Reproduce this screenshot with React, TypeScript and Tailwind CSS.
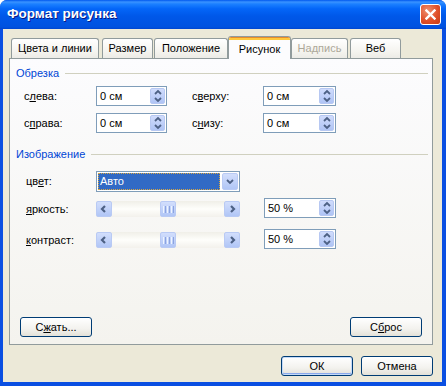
import React from "react";

function Chevron({ dir }: { dir: "up" | "down" | "left" | "right" }) {
  const pts: Record<string, string> = {
    up: "1,5 4,2 7,5",
    down: "1,2 4,5 7,2",
    left: "5,1 2,4 5,7",
    right: "3,1 6,4 3,7",
  };
  const vertical = dir === "up" || dir === "down";
  return (
    <svg width={8} height={vertical ? 7 : 8} viewBox={vertical ? "0 0 8 7" : "0 0 8 8"}>
      <polyline points={pts[dir]} fill="none" stroke="#4D6185" strokeWidth={vertical ? 1.8 : 2.2} />
    </svg>
  );
}

function Spinner({ value, className }: { value: string; className: string }) {
  return (
    <div className={`flex h-[20px] border border-[#7F9DB9] bg-white ${className}`}>
      <div className="flex flex-1 items-center pl-[3px] text-[11px] text-black">{value}</div>
      <div className="my-px mr-px flex w-[15px] flex-col items-center justify-around rounded-[2px] border border-[#B7C8F2] bg-[linear-gradient(#D0DCFC,#AFC4F5)]">
        <Chevron dir="up" />
        <Chevron dir="down" />
      </div>
    </div>
  );
}

function ScrollBtn({ dir }: { dir: "left" | "right" }) {
  return (
    <div className="flex h-[16px] w-[16px] items-center justify-center rounded-[2px] border border-[#B9CAF4] bg-[linear-gradient(#D2DEFC,#B1C6F6)]">
      <Chevron dir={dir} />
    </div>
  );
}

function Slider() {
  return (
    <div className="flex h-[16px] w-[144px] bg-[linear-gradient(#F0EFE8,#FEFEFB_50%,#F3F1EC)]">
      <ScrollBtn dir="left" />
      <div className="flex flex-1 justify-center">
        <div className="flex h-[16px] w-[16px] items-center justify-center gap-px rounded-[2px] border border-[#B9CAF4] bg-[linear-gradient(#D2DEFC,#B1C6F6)]">
          <span className="h-[7px] w-px bg-[#EEF4FE]" />
          <span className="h-[7px] w-px bg-[#8CA4E0]" />
          <span className="h-[7px] w-px bg-[#EEF4FE]" />
          <span className="h-[7px] w-px bg-[#8CA4E0]" />
          <span className="h-[7px] w-px bg-[#EEF4FE]" />
          <span className="h-[7px] w-px bg-[#8CA4E0]" />
        </div>
      </div>
      <ScrollBtn dir="right" />
    </div>
  );
}

function XpButton({ children, primary }: { children: React.ReactNode; primary?: boolean }) {
  return (
    <div
      className={`flex h-[20px] w-[72px] items-center justify-center rounded-[3px] border border-[#003C74] bg-[linear-gradient(#FFFFFF,#F3F2EE_60%,#E3E1D8)] text-[11px] text-black ${
        primary ? "shadow-[inset_0_0_0_1px_#C4DAF8,inset_0_-1px_0_1px_#8AA9EC]" : ""
      }`}
    >
      {children}
    </div>
  );
}

function Tab({ label, className, disabled }: { label: string; className: string; disabled?: boolean }) {
  return (
    <div
      className={`flex h-[20px] items-center justify-center rounded-t-[3px] border border-b-0 border-[#919B9C] bg-[linear-gradient(#FFFFFF,#F4F3EE_70%,#ECEBE6)] text-[11px] ${
        disabled ? "text-[#ACA899]" : "text-black"
      } ${className}`}
    >
      {label}
    </div>
  );
}

function Section({ title }: { title: string }) {
  return (
    <div className="flex h-[14px] items-center gap-[6px] pl-[6px] pr-[4px]">
      <span className="text-[11px] text-[#0046D5]">{title}</span>
      <span className="h-px flex-1 bg-[#D0D0BF]" />
    </div>
  );
}

export default function App() {
  return (
    <div className="flex h-[386px] w-[446px] flex-col overflow-hidden rounded-t-[7px] bg-[#0A4FE2] font-['Liberation_Sans',Arial,sans-serif]">
      {/* title bar */}
      <div className="flex h-[29px] items-center justify-between bg-[linear-gradient(#0058EE,#3A93FF_7%,#1B80FF_14%,#0466F8_30%,#0058E9_55%,#0054E3_80%,#0052E0_93%,#0046D0)] pl-[7px] pr-[5px]">
        <span className="text-[13.5px] font-bold text-white [text-shadow:1px_1px_0_#0A1883]">Формат рисунка</span>
        <div className="flex h-[21px] w-[21px] items-center justify-center rounded-[3px] border border-white bg-[radial-gradient(circle_at_35%_30%,#EE9070,#E0502A_55%,#C43A16)]">
          <svg width="11" height="11" viewBox="0 0 11 11">
            <path d="M1.5 1.5 L9.5 9.5 M9.5 1.5 L1.5 9.5" stroke="white" strokeWidth="2.4" strokeLinecap="square" />
          </svg>
        </div>
      </div>

      {/* body */}
      <div className="mb-[4px] ml-[3px] mr-[4px] flex flex-1 flex-col bg-[#ECE9D8] pl-[6px] pr-[9px] pt-[7px]">
        {/* tabs */}
        <div className="flex h-[22px] items-end pl-[2px]">
          <Tab label="Цвета и линии" className="w-[88px]" />
          <Tab label="Размер" className="ml-[3px] w-[51px]" />
          <Tab label="Положение" className="ml-px w-[74px]" />
          <div className="relative z-10 -mb-px flex h-[23px] w-[63px] flex-col overflow-hidden rounded-t-[3px] border border-b-0 border-[#919B9C] bg-[#FCFCFE]">
            <div className="h-[1px] bg-[#E68B2C]" />
            <div className="h-[2px] bg-[#FFC83C]" />
            <div className="flex flex-1 items-center justify-center pb-[1px] text-[11px] text-black">Рисунок</div>
          </div>
          <Tab label="Надпись" disabled className="w-[57px]" />
          <Tab label="Веб" className="ml-[2px] w-[51px]" />
        </div>

        {/* panel */}
        <div className="flex h-[287px] flex-col border border-[#919B9C] bg-[linear-gradient(#FCFCFE,#F4F3EE)] pt-[7px] text-[11px] text-black">
          <Section title="Обрезка" />

          <div className="mt-[6px] flex h-[20px] items-center pl-[14px]">
            <span className="w-[72px]">
              с<u>л</u>ева:
            </span>
            <Spinner value="0 см" className="w-[71px]" />
            <span className="ml-[25px] w-[71px]">
              с<u>в</u>ерху:
            </span>
            <Spinner value="0 см" className="w-[73px]" />
          </div>

          <div className="mt-[7px] flex h-[20px] items-center pl-[14px]">
            <span className="w-[72px]">
              с<u>п</u>рава:
            </span>
            <Spinner value="0 см" className="w-[71px]" />
            <span className="ml-[25px] w-[71px]">
              с<u>н</u>изу:
            </span>
            <Spinner value="0 см" className="w-[73px]" />
          </div>

          <div className="mt-[14px]">
            <Section title="Изображение" />
          </div>

          <div className="mt-[10px] flex h-[21px] items-center pl-[16px]">
            <span className="w-[70px]">
              цв<u>е</u>т:
            </span>
            <div className="flex h-[21px] w-[144px] border border-[#7F9DB9] bg-white p-px">
              <div className="flex flex-1 items-center border border-dotted border-[#D9A640] bg-[#316AC5] pl-[1px] text-white">
                Авто
              </div>
              <div className="ml-[2px] flex w-[16px] items-center justify-center rounded-[2px] border border-[#B9CAF4] bg-[linear-gradient(#D2DEFC,#B1C6F6)]">
                <Chevron dir="down" />
              </div>
            </div>
          </div>

          <div className="mt-[6px] flex h-[20px] items-center pl-[16px]">
            <span className="w-[70px] pt-[3px]">
              <u>я</u>ркость:
            </span>
            <div className="mt-[2px]">
              <Slider />
            </div>
            <Spinner value="50 %" className="ml-[24px] w-[72px]" />
          </div>

          <div className="mt-[11px] flex h-[20px] items-center pl-[16px]">
            <span className="w-[70px] pt-[2px]">
              <u>к</u>онтраст:
            </span>
            <div className="mt-[2px]">
              <Slider />
            </div>
            <Spinner value="50 %" className="ml-[24px] w-[72px]" />
          </div>

          <div className="mb-[7px] mt-auto flex justify-between px-[10px]">
            <XpButton>
              С<u>ж</u>ать...
            </XpButton>
            <XpButton>
              С<u>б</u>рос
            </XpButton>
          </div>
        </div>

        {/* dialog buttons */}
        <div className="mt-[11px] flex justify-end gap-[8px]">
          <XpButton primary>ОК</XpButton>
          <XpButton>Отмена</XpButton>
        </div>
      </div>
    </div>
  );
}
